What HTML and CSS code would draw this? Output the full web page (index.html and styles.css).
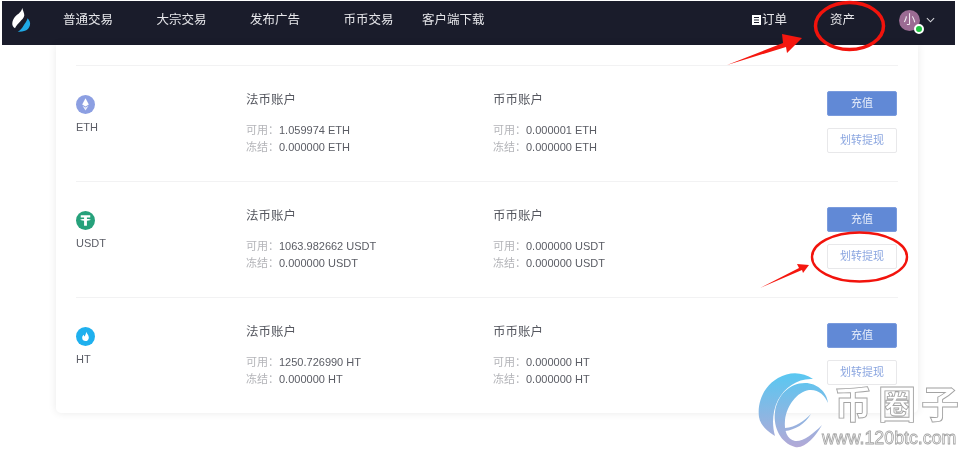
FILE: index.html
```html
<!DOCTYPE html>
<html lang="zh-CN">
<head>
<meta charset="utf-8">
<title>资产</title>
<link rel="stylesheet" href="styles.css">
</head>
<body>
<header class="topbar">
  <svg class="logo" viewBox="0 0 19 26" width="19" height="26">
    <path fill="#fff" d="M10.300 1C11 4 12.400 6 12.300 8.500 12 11 9.500 13 8 14.700 6.200 16.700 4 18.500 3 21.300 1 20 0 18 .3 16 .6 13.500 1.500 11.500 3 9.700 5 7.500 9 6 10.300 1z"/>
    <path fill="#1fa9e6" d="M15.700 11.300C17.500 13.500 18.500 15.500 18 18 17.300 21 15.500 23 13 23.700 10.500 24.600 8 25 5.700 24.700 8 23.500 10 21.500 11.300 19 13 16.500 14.800 14 15.700 11.300z"/>
  </svg>
  <nav class="nav">
    <a class="nav-item">普通交易</a>
    <a class="nav-item">大宗交易</a>
    <a class="nav-item">发布广告</a>
    <a class="nav-item nav-tight">币币交易</a>
    <a class="nav-item">客户端下载</a>
  </nav>
  <div class="user-area">
    <a class="order"><svg class="order-icon" viewBox="0 0 9 10" width="9" height="10"><path fill="#fff" fill-rule="evenodd" d="M0 0h9v10H0zM2 2v1h5V2zM2 4.500v1h5v-1zM2 7v1h5V7z"/></svg>订单</a>
    <a class="assets">资产</a>
    <div class="avatar">小<span class="online"></span></div>
    <svg class="chev" viewBox="0 0 10 6" width="9" height="6"><path fill="none" stroke="#d5d6dc" stroke-width="1.200" d="M1 1l4 4 4-4"/></svg>
  </div>
</header>

<main class="card">
  <section class="row">
    <div class="coin">
      <svg class="coin-icon" viewBox="0 0 20 20" width="19" height="19"><circle cx="10" cy="10" r="10" fill="#8c9fe2"/><path fill="#fff" d="M10 3.500l3.500 6.500-3.500 2-3.500-2z"/><path fill="#fff" d="M6.800 11.200l3.200 1.900 3.200-1.900-3.200 5z" opacity=".8"/></svg>
      <span class="coin-name">ETH</span>
    </div>
    <div class="account">
      <h3 class="acc-title">法币账户</h3>
      <p class="line"><span class="lab">可用：</span>1.059974 ETH</p>
      <p class="line"><span class="lab">冻结：</span>0.000000 ETH</p>
    </div>
    <div class="account">
      <h3 class="acc-title">币币账户</h3>
      <p class="line"><span class="lab">可用：</span>0.000001 ETH</p>
      <p class="line"><span class="lab">冻结：</span>0.000000 ETH</p>
    </div>
    <div class="actions"><a class="btn primary">充值</a><a class="btn ghost">划转提现</a></div>
  </section>

  <section class="row">
    <div class="coin">
      <svg class="coin-icon" viewBox="0 0 20 20" width="19" height="19"><circle cx="10" cy="10" r="10" fill="#26a17b"/><path fill="#fff" d="M5 4.500h10v2.300h-3.500V8.300c2.200.1 4 .5 4 1s-1.800.9-4 1V15.500h-3v-5.200c-2.200-.1-4-.5-4-1s1.800-.9 4-1V6.800H5z"/></svg>
      <span class="coin-name">USDT</span>
    </div>
    <div class="account">
      <h3 class="acc-title">法币账户</h3>
      <p class="line"><span class="lab">可用：</span>1063.982662 USDT</p>
      <p class="line"><span class="lab">冻结：</span>0.000000 USDT</p>
    </div>
    <div class="account">
      <h3 class="acc-title">币币账户</h3>
      <p class="line"><span class="lab">可用：</span>0.000000 USDT</p>
      <p class="line"><span class="lab">冻结：</span>0.000000 USDT</p>
    </div>
    <div class="actions"><a class="btn primary">充值</a><a class="btn ghost">划转提现</a></div>
  </section>

  <section class="row">
    <div class="coin">
      <svg class="coin-icon" viewBox="0 0 20 20" width="19" height="19"><circle cx="10" cy="10" r="10" fill="#1fb0ee"/><path fill="#fff" d="M10.800 5c.3 1.800 2.700 3.200 2.700 6 0 2.500-1.700 3.800-3.500 3.800S6.500 13.500 6.500 11.300c0-1.500.8-2.500 1.700-3.200 0 .9.300 1.500.8 1.900.9-1.300 1.600-3 1.800-5z"/></svg>
      <span class="coin-name">HT</span>
    </div>
    <div class="account">
      <h3 class="acc-title">法币账户</h3>
      <p class="line"><span class="lab">可用：</span>1250.726990 HT</p>
      <p class="line"><span class="lab">冻结：</span>0.000000 HT</p>
    </div>
    <div class="account">
      <h3 class="acc-title">币币账户</h3>
      <p class="line"><span class="lab">可用：</span>0.000000 HT</p>
      <p class="line"><span class="lab">冻结：</span>0.000000 HT</p>
    </div>
    <div class="actions"><a class="btn primary">充值</a><a class="btn ghost">划转提现</a></div>
  </section>
</main>

<svg class="marks" viewBox="0 0 959 449" width="959" height="449">
  <ellipse cx="849.500" cy="26" rx="34" ry="23.500" fill="none" stroke="#f2130c" stroke-width="3.500"/>
  <ellipse cx="859.500" cy="257" rx="47.500" ry="24.500" fill="none" stroke="#f2130c" stroke-width="2.400"/>
  <path fill="#f5170f" d="M727 65l56-22-1-9 20 4-15 15-1-6z"/>
  <path fill="#f5170f" d="M760 288l39-20-2-4 12 1-6 8-1-3z"/>
  <defs>
    <linearGradient id="wm" gradientUnits="userSpaceOnUse" x1="0" y1="372" x2="0" y2="449">
      <stop offset="0" stop-color="#57c8f2"/>
      <stop offset="1" stop-color="#b5a8d6"/>
    </linearGradient>
  </defs>
  <path fill="url(#wm)" d="M813 379C803 372 790 371 778 378 764 386 757 402 759 417 760 425 768 432 775 436 772 425 772 412 778 400 785 387 798 378 813 379z"/>
  <path fill="url(#wm)" d="M828 403C827 392 817 383 805 383 789 383 777 396 775 412 773 428 781 443 795 447 805 449 815 437 822 425 813 434 803 442 795 441 787 439 784 431 785 420 787 405 797 392 809 390 818 389 825 395 828 403z"/>
  <path fill="url(#wm)" d="M785 431C795 430 805 424 811 414 804 421 796 427 785 428z"/>
  <text class="wm-cn" x="834 878 921" y="418">币圈子</text>
  <text class="wm-url" x="822" y="444">www.120btc.com</text>
</svg>
</body>
</html>
```

FILE: styles.css
```css
* { box-sizing: border-box; }
html, body { margin: 0; padding: 0; background: #fff; }
body {
  width: 959px;
  height: 449px;
  overflow: hidden;
  position: relative;
  font-family: "Liberation Sans", "Noto Sans CJK SC", sans-serif;
  color: #55575f;
  filter: blur(.35px);
}
a { display: block; }

.topbar {
  margin: 1px 4px 0 2px;
  height: 44px;
  background: #1a1c2b;
  display: flex;
  align-items: center;
  padding: 0 0 6px 10px;
  color: #e6e6ea;
  font-size: 12.500px;
  line-height: 20px;
}
.logo { flex: none; }
.nav { display: flex; gap: 43.500px; margin-left: 32px; }
.nav-tight { margin-right: -15px; }
.nav-item { white-space: nowrap; }
.user-area { margin-left: auto; display: flex; align-items: center; }
.order { display: flex; align-items: center; gap: 1px; margin-right: 43px; }
.order-icon { flex: none; }
.assets { margin-right: 44px; }
.avatar {
  position: relative;
  width: 21px;
  height: 21px;
  border-radius: 50%;
  background: #9b6b93;
  color: #f4eef3;
  font-size: 12px;
  line-height: 21px;
  text-align: center;
}
.online {
  position: absolute;
  right: -4px;
  bottom: -3px;
  width: 10px;
  height: 10px;
  border-radius: 50%;
  background: #1fc43f;
  border: 2px solid #fff;
}
.chev { margin: 0 20px 0 6px; }

.card {
  margin: 0 0 0 56px;
  width: 862px;
  height: 368px;
  padding: 20px 20px 0;
  background: #fff;
  border-radius: 0 0 5px 5px;
  box-shadow: 0 0 8px rgba(0, 0, 0, .09);
}
.row {
  height: 116px;
  border-top: 1px solid #f2f2f3;
  display: grid;
  grid-template-columns: 170px 247px 334px 71px;
  padding-top: 25px;
}
.coin { display: flex; flex-direction: column; align-items: flex-start; padding-top: 4px; }
.coin-icon { display: block; }
.coin-name { font-size: 11px; line-height: 14px; margin-top: 6px; color: #5b5d66; }
.acc-title {
  margin: 0 0 13px;
  font-size: 12.500px;
  font-weight: 400;
  line-height: 18px;
  color: #55575f;
}
.line {
  margin: 0;
  font-size: 11px;
  line-height: 17px;
  color: #5a5c64;
  white-space: nowrap;
}
.lab { color: #b3b4b8; }
.actions { display: flex; flex-direction: column; gap: 12px; }
.btn {
  width: 70px;
  height: 25px;
  font-size: 11px;
  line-height: 23px;
  text-align: center;
  border-radius: 2px;
}
.primary { background: #6189d6; color: #e8eefa; border: 1px solid #7a9bdd; }
.ghost { background: #fff; color: #8ba6e0; border: 1px solid #e8e8ea; }

.marks { position: absolute; left: 0; top: 0; }
.wm-cn {
  font-family: "Noto Sans CJK SC", sans-serif;
  font-weight: 700;
  font-size: 38px;
  fill: #fff;
  stroke: #a3a3a3;
  stroke-width: .9px;
}
.wm-url {
  font-family: "Liberation Sans", sans-serif;
  font-size: 17.800px;
  fill: #fff;
  stroke: #a3a3a3;
  stroke-width: .8px;
}
```
